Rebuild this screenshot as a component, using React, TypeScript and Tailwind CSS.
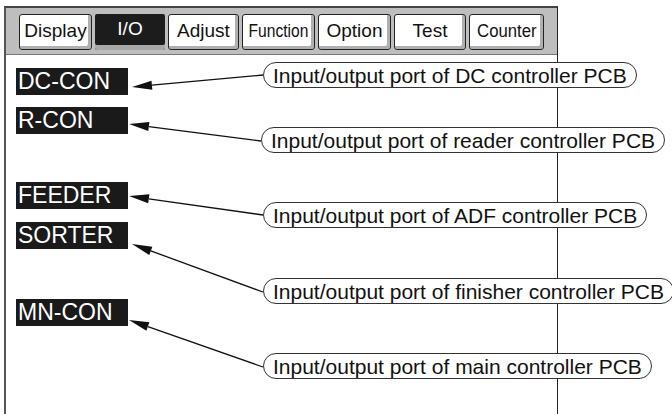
import React from "react";

const tabs = [
  { label: "Display", w: "w-[73px]" },
  { label: "I/O", w: "w-[70px]", active: true },
  { label: "Adjust", w: "w-[71px]" },
  { label: "Function", w: "w-[73px]", sx: "scale-x-[0.82]" },
  { label: "Option", w: "w-[73px]" },
  { label: "Test", w: "w-[72px]" },
  { label: "Counter", w: "w-[75px]", sx: "scale-x-[0.88]" },
];

// diagram nodes, coordinates relative to the content area under the tab bar
const ports = [
  { name: "DC-CON", top: "top-[13px]", pillTop: "top-[7px]", pillLeft: "left-[257px]", text: "Input/output port of DC controller PCB", from: [257, 20], to: [126, 32] },
  { name: "R-CON", top: "top-[52px]", pillTop: "top-[72px]", pillLeft: "left-[255px]", text: "Input/output port of reader controller PCB", from: [255, 86], to: [123, 69] },
  { name: "FEEDER", top: "top-[127px]", pillTop: "top-[147px]", pillLeft: "left-[257px]", text: "Input/output port of ADF controller PCB", from: [257, 160], to: [123, 141] },
  { name: "SORTER", top: "top-[167px]", pillTop: "top-[223px]", pillLeft: "left-[257px]", text: "Input/output port of finisher controller PCB", from: [257, 237], to: [126, 189] },
  { name: "MN-CON", top: "top-[244px]", pillTop: "top-[298px]", pillLeft: "left-[257px]", text: "Input/output port of main controller PCB", from: [257, 312], to: [123, 265] },
];

function Arrow({ from, to }: { from: number[]; to: number[] }) {
  const dx = from[0] - to[0];
  const dy = from[1] - to[1];
  const len = Math.hypot(dx, dy);
  const ux = dx / len, uy = dy / len;
  const hl = 20, hw = 4.5;
  const bx = to[0] + ux * hl, by = to[1] + uy * hl;
  const pts = `${to[0]},${to[1]} ${bx - uy * hw},${by + ux * hw} ${bx + uy * hw},${by - ux * hw}`;
  return (
    <g>
      <line x1={from[0]} y1={from[1]} x2={bx} y2={by} stroke="#111" strokeWidth="1.3" />
      <polygon points={pts} fill="#111" />
    </g>
  );
}

export default function App() {
  return (
    <div className="w-[672px] h-[414px] bg-white overflow-hidden" style={{ fontFamily: '"Liberation Sans", Arial, sans-serif' }}>
      <div className="ml-[4px] mt-[6px] w-[554px] h-[408px] border-l-2 border-r border-t-2 border-l-[#555] border-r-[#222] border-t-[#444] flex flex-col">
        <div className="h-[47px] shrink-0 bg-[#bebebe] border-b border-[#777] flex items-start pt-[6px] pl-[13px] gap-[3px]">
          {tabs.map((t) =>
            t.active ? (
              <div key={t.label} className={`${t.w} h-[36px] bg-[#1c1c1c] text-white text-[19px] flex items-center justify-center pb-[5px] rounded-[2px] shadow-[inset_0_-5px_0_#a8a8a8]`}>
                {t.label}
              </div>
            ) : (
              <div key={t.label} className={`${t.w} h-[36px] bg-white text-[#111] border border-[#222] rounded-[3px] flex items-center justify-center pb-[2px] shadow-[inset_-3px_-3px_0_#b0b0b0]`}>
                {t.sx ? (
                  <span className={`inline-block whitespace-nowrap text-[19px] ${t.sx}`}>{t.label}</span>
                ) : (
                  <span className="text-[19px]">{t.label}</span>
                )}
              </div>
            )
          )}
        </div>
        <div className="relative flex-1">
          <svg className="absolute left-0 top-0 overflow-visible" width="660" height="360">
            {ports.map((p) => (
              <Arrow key={p.name} from={p.from} to={p.to} />
            ))}
          </svg>
          {ports.map((p) => (
            <div key={p.name} className={`absolute left-[10px] ${p.top} w-[112px] h-[27px] bg-[#1a1a1a] text-white text-[23px] leading-none flex items-center pl-[2px]`}>
              {p.name}
            </div>
          ))}
          {ports.map((p) => (
            <div key={p.text} className={`absolute ${p.pillLeft} ${p.pillTop} h-[26px] whitespace-nowrap bg-white border-[1.5px] border-[#333] rounded-full px-[9px] text-[21px] leading-none text-[#111] flex items-center`}>
              {p.text}
            </div>
          ))}
        </div>
      </div>
    </div>
  );
}
